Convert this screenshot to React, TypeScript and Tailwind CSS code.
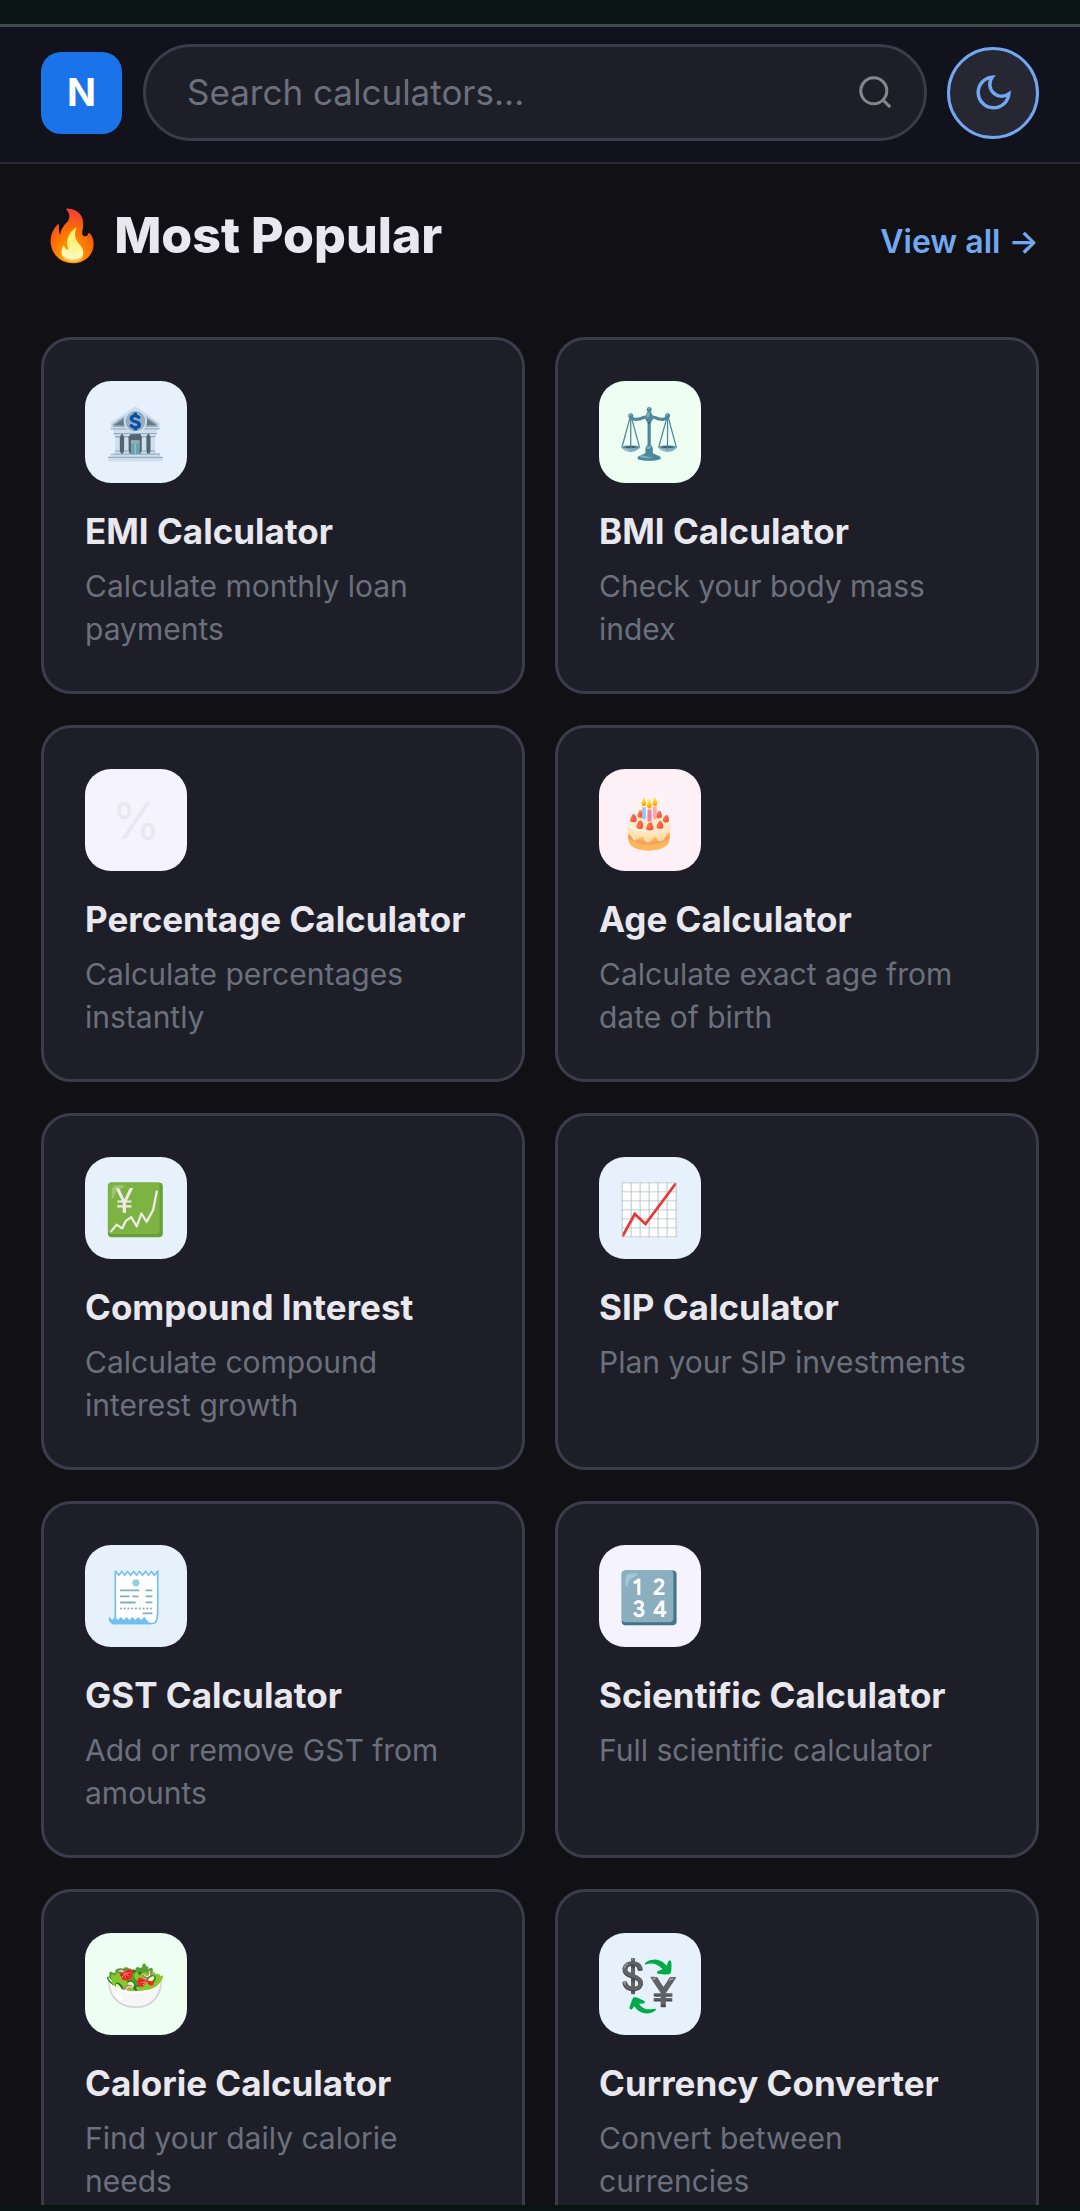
import { useState } from 'react'

interface Calculator {
  icon: string;
  iconBg: string;
  name: string;
  description: string;
}

const calculators: Calculator[] = [
  { icon: '🏦', iconBg: 'bg-[#e6f1fc]', name: 'EMI Calculator', description: 'Calculate monthly loan payments' },
  { icon: '⚖️', iconBg: 'bg-[#effef3]', name: 'BMI Calculator', description: 'Check your body mass index' },
  { icon: '%', iconBg: 'bg-[#f4f3fe]', name: 'Percentage Calculator', description: 'Calculate percentages instantly' },
  { icon: '🎂', iconBg: 'bg-[#fdf1f7]', name: 'Age Calculator', description: 'Calculate exact age from date of birth' },
  { icon: '💹', iconBg: 'bg-[#e6f1fc]', name: 'Compound Interest', description: 'Calculate compound interest growth' },
  { icon: '📈', iconBg: 'bg-[#e6f1fc]', name: 'SIP Calculator', description: 'Plan your SIP investments' },
  { icon: '🧾', iconBg: 'bg-[#e6f1fc]', name: 'GST Calculator', description: 'Add or remove GST from amounts' },
  { icon: '🔢', iconBg: 'bg-[#f4f3fe]', name: 'Scientific Calculator', description: 'Full scientific calculator' },
  { icon: '🥗', iconBg: 'bg-[#effef3]', name: 'Calorie Calculator', description: 'Find your daily calorie needs' },
  { icon: '💱', iconBg: 'bg-[#e6f1fc]', name: 'Currency Converter', description: 'Convert between currencies' },
]

function CalculatorCard({ data }: { data: Calculator }) {
  return (
    <a
      href="#"
      className="flex flex-col items-start rounded-[30px] border-3 border-[#3b3b49] bg-[#1e1e29] px-[41px] pt-[41px] pb-10"
    >
      <span
        className={`flex size-[102px] items-center justify-center rounded-[26px] pt-0.5 text-[50px] leading-none text-[#e8e8ee] ${data.iconBg}`}
      >
        {data.icon}
      </span>
      <h3 className="mt-[26px] text-[35px] leading-[44px] font-bold whitespace-nowrap text-[#e8e8ee]">
        {data.name}
      </h3>
      <p className="mt-3 text-[30px] leading-[43px] text-[#6b707c]">{data.description}</p>
    </a>
  )
}

export default function App() {
  const [keyword, setKeyword] = useState('')

  return (
    <div className="flex h-screen flex-col bg-[#081514] pt-6 pb-1.5 font-['Inter','Noto_Color_Emoji',sans-serif]">
      <div className="min-h-0 flex-1 overflow-y-auto border-t-3 border-[#3f4a4a] bg-[#111115] [scrollbar-width:none]">
        <header className="flex items-center border-b-2 border-[#2a2b35] bg-[#11121c] px-[41px] pt-[17px] pb-[21px]">
          <a
            href="#"
            className="flex h-[82px] w-[81px] shrink-0 items-center justify-center rounded-[20px] bg-[#1a73e8] text-[38px] font-bold text-white"
          >
            N
          </a>
          <form className="mr-5 ml-[21px] flex h-[97px] min-w-0 flex-1 items-center rounded-full border-3 border-[#3b3b49] bg-[#1e1e29] pr-7 pl-[41px]">
            <input
              type="text"
              aria-label="Search calculators"
              placeholder="Search calculators..."
              value={keyword}
              onChange={(e) => setKeyword(e.target.value)}
              className="min-w-0 flex-1 bg-transparent text-[35px] text-[#e8e8ee] outline-none placeholder:text-[#6b707c]"
            />
            <button type="submit" aria-label="Search" className="text-[#85868b]">
              <svg viewBox="0 0 24 24" className="size-[41px]" fill="none" stroke="currentColor" strokeWidth="1.8">
                <circle cx="11" cy="11" r="7.6" />
                <path d="m20.6 20.6-4.2-4.2" />
              </svg>
            </button>
          </form>
          <button
            type="button"
            aria-label="Toggle dark mode"
            className="flex size-[92px] shrink-0 items-center justify-center rounded-full border-3 border-[#72a8f2] bg-[#272733] text-[#72a8f2]"
          >
            <svg viewBox="0 0 24 24" className="size-[41px]" fill="none" stroke="currentColor" strokeWidth="2">
              <path d="M21 12.79A9 9 0 1 1 11.21 3 7 7 0 0 0 21 12.79z" />
            </svg>
          </button>
        </header>

        <main className="px-[41px] pt-9 pb-10">
          <div className="mb-[67px] flex items-end justify-between">
            <h2 className="text-[50px] leading-[70px] font-extrabold text-[#e8e8ee]">🔥 Most Popular</h2>
            <a href="#" className="text-[32px] leading-[56px] font-semibold text-[#72a8f2]">
              View all →
            </a>
          </div>

          <div className="grid grid-cols-2 gap-x-[30px] gap-y-[31px]">
            {calculators.map((item) => (
              <CalculatorCard key={item.name} data={item} />
            ))}
          </div>
        </main>
      </div>
    </div>
  )
}
